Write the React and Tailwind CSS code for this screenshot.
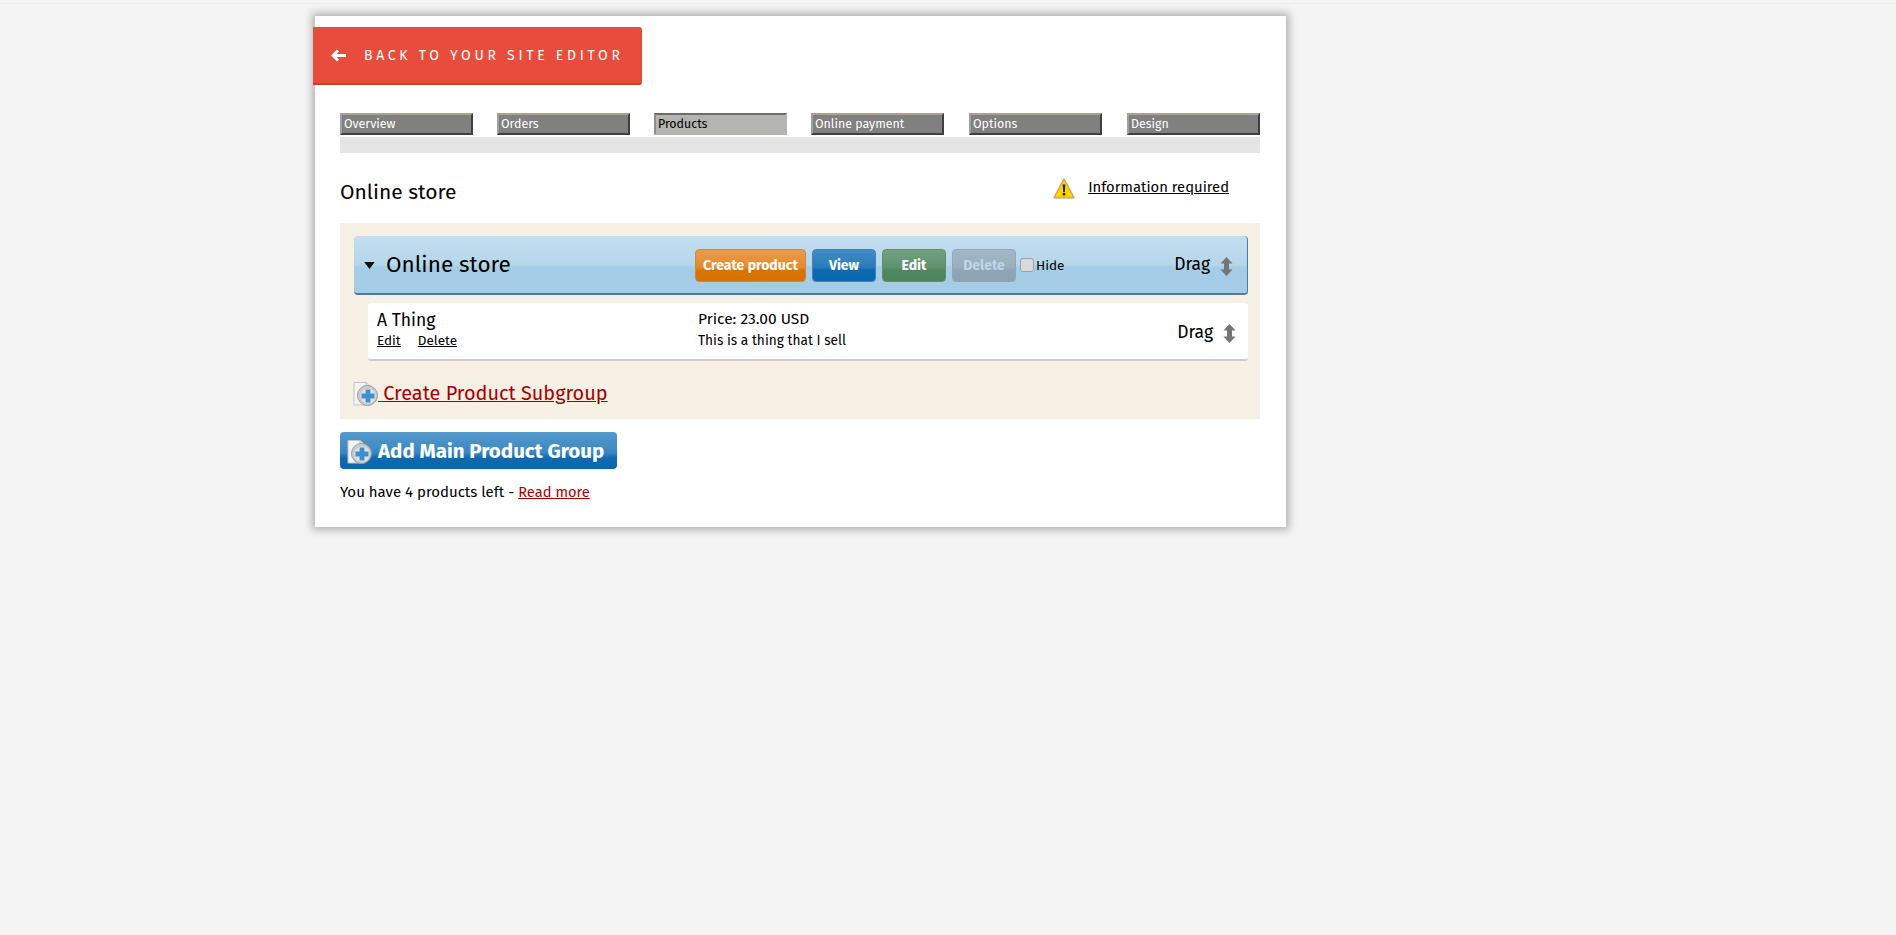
import React from "react";

const font = "font-['Trebuchet_MS','Fira_Sans','Noto_Sans',sans-serif]";

function PlusDoc({ className }) {
  return (
    <svg viewBox="0 0 25 25" className={className}>
      <path d="M1 1.5 H13 L17 5 V24 H1 Z" fill="#f4f4f2" stroke="#c4c4c0" strokeWidth="1" />
      <path d="M13 1.5 V5 H17" fill="#ddd" stroke="#c4c4c0" strokeWidth="1" />
      <circle cx="14.5" cy="14.5" r="10" fill="#c9cbcc" stroke="#9a9c9e" strokeWidth="1" />
      <circle cx="15" cy="15" r="7.6" fill="#dfe6ea" />
      <path d="M12.6 8.5 h4.8 v4.1 h4.1 v4.8 h-4.1 v4.1 h-4.8 v-4.1 h-4.1 v-4.8 h4.1 Z" fill="#3d8fd0" />
    </svg>
  );
}

function DragArrow({ className }) {
  return (
    <svg viewBox="0 0 13 19" className={className}>
      <path d="M6.5 0 L12.5 6.5 H9 V12.5 H12.5 L6.5 19 L0.5 12.5 H4 V6.5 H0.5 Z" fill="#757575" />
    </svg>
  );
}

function Warning() {
  return (
    <svg viewBox="0 0 22 21" className="w-[22px] h-[21px] shrink-0 mt-[1px]">
      <path d="M11 1 L21 19.5 H1 Z" fill="#ffd400" stroke="#c9a24a" strokeWidth="1.4" strokeLinejoin="round" />
      <path d="M1.5 20 H21.5" stroke="#b9b9b0" strokeWidth="1.2" />
      <path d="M9.7 6.5 h2.6 l-.5 7.5 h-1.6 Z" fill="#222" />
      <circle cx="11" cy="16.2" r="1.4" fill="#222" />
    </svg>
  );
}

const tabs = ["Overview", "Orders", "Products", "Online payment", "Options", "Design"];

function Tab({ label, index }) {
  const active = label === "Products";
  return (
    <a
      className={
        "w-[133px] h-[22px] flex items-center pl-[2px] text-[12.4px] leading-none border-2 " +
        (index >= 4 ? "ml-[1px] " : "") +
        (active
          ? "bg-[#b4b4b0] text-black border-t-[#6d6d68] border-l-[#8f8f8a] border-r-[#b4b4b0] border-b-[#b4b4b0]"
          : "bg-[#808080] text-white border-t-[#aca08e] border-l-[#a0a0a0] border-r-[#3f3f3f] border-b-[#3f3f3f]")
      }
    >
      {label}
    </a>
  );
}

function GlossButton({ children, className }) {
  return (
    <a
      className={
        "h-[33px] flex items-center justify-center rounded-[4px] border text-[14px] font-bold " + className
      }
    >
      {children}
    </a>
  );
}

export default function App() {
  return (
    <div className={"min-h-[935px] h-[935px] overflow-hidden bg-[#f4f4f4] text-black " + font}>
      <div className="h-[4px] border-b border-[#ececec]" />
      <div className="ml-[315px] mt-[12px] w-[971px] h-[511px] bg-white shadow-[0_0_8px_3px_rgba(0,0,0,0.28)] pt-[11px]">
        <a className="-ml-[2px] w-[329px] h-[58px] flex items-center bg-[#e74c3c] border-b-2 border-[#c8402f] rounded-r-[3px] text-white text-[14px] tracking-[3.72px] pl-[18px]">
          <svg viewBox="0 0 16 12" className="w-[16px] h-[13px] mr-[17px]">
            <path d="M7 1 L2 6 L7 11 M2 6 H15" fill="none" stroke="#fff" strokeWidth="3" />
          </svg>
          BACK TO YOUR SITE EDITOR
        </a>

        <div className="ml-[25px] mr-[26px] mt-[28px]">
          <div className="flex gap-[24px]">
            {tabs.map((t, i) => (
              <Tab key={t} label={t} index={i} />
            ))}
          </div>
          <div className="h-[16px] mt-[2px] bg-[#e4e4e4]" />

          <div className="h-[70px] flex justify-between">
            <h1 className="text-[21px] leading-none mt-[29px]">Online store</h1>
            <div className="flex mt-[24px] mr-[31px] items-start gap-[13px]">
              <Warning />
              <a className="text-[14.8px] leading-[20px] underline">Information required</a>
            </div>
          </div>

          <section className="h-[196px] bg-[#f6efe4] pt-[13px] pl-[14px] pr-[12px]">
            <div className="h-[59px] flex items-center pl-[10px] pr-[14px] rounded-[4px] border-b-2 border-r border-[#4f7a99] bg-[linear-gradient(#c4deef,#b6d6ea_50%,#a6cde6_55%,#a5cce6)]">
              <svg viewBox="0 0 12 8" className="w-[11px] h-[7px] mr-[11px] mt-[1px]">
                <path d="M0 0 H12 L6 8 Z" fill="#111" />
              </svg>
              <h2 className="text-[22.5px] leading-none w-[309px] mt-[1px]">Online store</h2>
              <div className="flex items-center gap-[6px] mt-[1px]">
                <GlossButton className="w-[111px] text-white border-[#c98a4e] bg-[linear-gradient(#ea9b4c,#e68a2c_55%,#d87400_65%,#d67300)]">
                  Create product
                </GlossButton>
                <GlossButton className="w-[64px] text-white border-[#3f82b5] bg-[linear-gradient(#418cc4,#2a7dbb_55%,#0d69b0_65%,#0a68ae)]">
                  View
                </GlossButton>
                <GlossButton className="w-[64px] text-white border-[#5f8f70] bg-[linear-gradient(#72a17f,#619270_55%,#50875e_65%,#4e865c)]">
                  Edit
                </GlossButton>
                <GlossButton className="w-[64px] text-[#bdd6e8] border-[#8fa8b8] bg-[linear-gradient(#a2b8c6,#99afbd_55%,#8fa5b5_65%,#8ea4b4)]">
                  Delete
                </GlossButton>
              </div>
              <span className="ml-[4px] mt-[1px] w-[14px] h-[14px] rounded-[3px] border border-[#a0a0a0] bg-[#d9dadb]" />
              <span className="ml-[2px] mt-[3px] text-[13.5px] leading-none">Hide</span>
              <span className="ml-auto text-[17.5px] leading-none">Drag</span>
              <DragArrow className="ml-[10px] w-[13px] h-[19px] mt-[3px]" />
            </div>

            <div className="ml-[14px] mt-[8px] h-[58px] flex items-center bg-white rounded-[3px] border-b-2 border-[#cccccc] pl-[9px] pr-[12px]">
              <div className="w-[321px] -mt-[2px]">
                <div className="text-[17.5px] leading-[20px]">A Thing</div>
                <div className="text-[13.5px] leading-[16px] mt-[2px] flex gap-[17px]">
                  <a className="underline">Edit</a>
                  <a className="underline">Delete</a>
                </div>
              </div>
              <div className="-mt-[3px]">
                <div className="text-[15.5px] leading-[18px]">Price: 23.00 USD</div>
                <div className="text-[13.7px] leading-[16px] mt-[5px]">This is a thing that I sell</div>
              </div>
              <span className="ml-auto text-[17.5px] leading-none mt-[4px]">Drag</span>
              <DragArrow className="ml-[10px] w-[13px] h-[19px] mt-[4px]" />
            </div>

            <a className="mt-[20px] -ml-[1px] flex items-center text-[#a80000] underline text-[19.9px] leading-none">
              <PlusDoc className="w-[25px] h-[25px]" />
              <span>&nbsp;Create Product Subgroup</span>
            </a>
          </section>

          <a className="mt-[13px] w-[277px] h-[37px] flex items-center pl-[7px] gap-[6px] pt-[1px] rounded-[4px] bg-[linear-gradient(#5499cc,#3a88c2_55%,#0f6ab0_70%,#0a68ae)] text-white text-[20.5px] font-bold">
            <PlusDoc className="w-[25px] h-[25px] shrink-0" />
            Add Main Product Group
          </a>

          <p className="mt-[13px] text-[15px] leading-[20px]">
            You have 4 products left -{" "}
            <a className="text-[#a80000] underline text-[14.7px]">Read more</a>
          </p>
        </div>
      </div>
    </div>
  );
}
